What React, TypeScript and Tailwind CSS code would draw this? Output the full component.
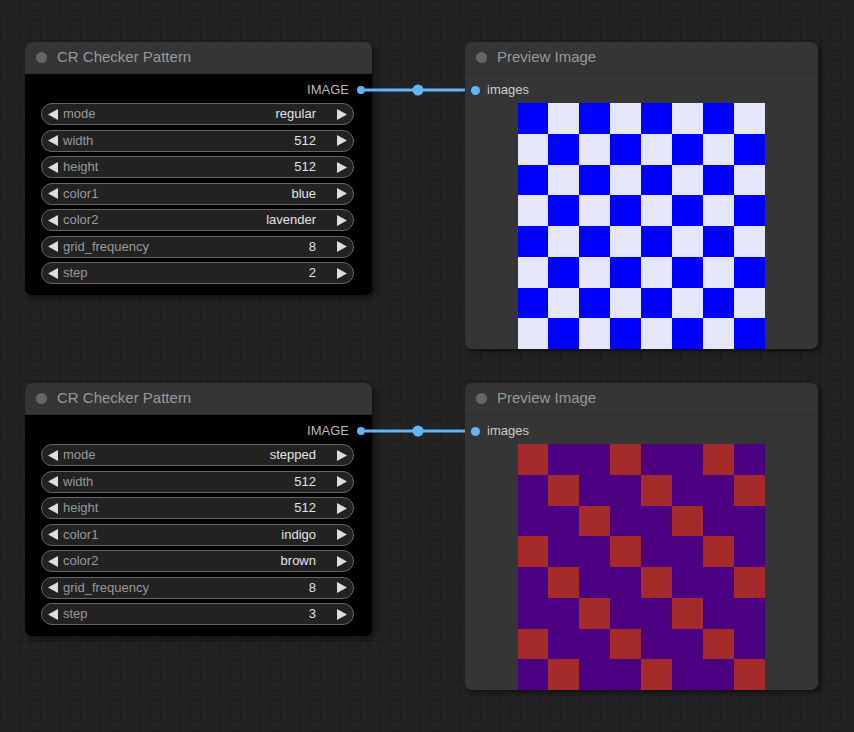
import React from 'react';

type Widget = { name: string; value: string };

const FONT = { fontFamily: '"Liberation Sans", Arial, sans-serif' };

const NODES: { top: number; widgets: Widget[]; c1: string; c2: string; stepped: boolean }[] = [
  {
    top: 42,
    c1: '#0000ff',
    c2: '#e6e6fa',
    stepped: false,
    widgets: [
      { name: 'mode', value: 'regular' },
      { name: 'width', value: '512' },
      { name: 'height', value: '512' },
      { name: 'color1', value: 'blue' },
      { name: 'color2', value: 'lavender' },
      { name: 'grid_frequency', value: '8' },
      { name: 'step', value: '2' },
    ],
  },
  {
    top: 383,
    c1: '#a52a2a',
    c2: '#4b0082',
    stepped: true,
    widgets: [
      { name: 'mode', value: 'stepped' },
      { name: 'width', value: '512' },
      { name: 'height', value: '512' },
      { name: 'color1', value: 'indigo' },
      { name: 'color2', value: 'brown' },
      { name: 'grid_frequency', value: '8' },
      { name: 'step', value: '3' },
    ],
  },
];

function Title({ text }: { text: string }) {
  return (
    <div className="h-[32px] flex items-center gap-[10px] pl-[11px] bg-[#353535] border-b border-[#2c2c2c] rounded-t-[7px]">
      <span className="w-[11px] h-[11px] rounded-full bg-[#666]" />
      <span className="text-[15px] text-[#999]">{text}</span>
    </div>
  );
}

function Arrow({ dir }: { dir: 'l' | 'r' }) {
  return (
    <svg width="10" height="11" viewBox="0 0 10 11" className="shrink-0">
      <polygon points={dir === 'l' ? '10,0 10,11 0,5.5' : '0,0 0,11 10,5.5'} fill="#ddd" />
    </svg>
  );
}

function WidgetRow({ w }: { w: Widget }) {
  return (
    <div className="h-[22px] flex items-center rounded-full border border-[#666] bg-[#222] pl-[6px] pr-[6px] text-[13px]">
      <Arrow dir="l" />
      <span className="text-[#999] ml-[5px]">{w.name}</span>
      <span className="flex-1" />
      <span className="text-[#e2e2e2] mr-[21px]">{w.value}</span>
      <Arrow dir="r" />
    </div>
  );
}

function Checker({ c1, c2, stepped }: { c1: string; c2: string; stepped: boolean }) {
  const cells = [];
  for (let r = 0; r < 8; r++) {
    for (let c = 0; c < 8; c++) {
      const on = stepped ? (((c - r) % 3) + 3) % 3 === 0 : (r + c) % 2 === 0;
      cells.push(<div key={`${r}-${c}`} style={{ background: on ? c1 : c2 }} />);
    }
  }
  return <div className="grid grid-cols-8 grid-rows-8 w-[247px] h-[246px]">{cells}</div>;
}

export default function App() {
  return (
    <div
      className="relative w-[854px] h-[732px] overflow-hidden bg-[#232323] bg-[linear-gradient(#1d1d1d_1px,transparent_1px),linear-gradient(90deg,#1d1d1d_1px,transparent_1px)] bg-[size:10px_10px]"
      style={FONT}
    >
      {NODES.map((n, i) => (
        <React.Fragment key={i}>
          {/* checker node */}
          <div
            className="absolute left-[25px] w-[347px] h-[253px] rounded-[7px] bg-black shadow-[3px_3px_6px_rgba(0,0,0,0.5)] flex flex-col"
            style={{ top: n.top }}
          >
            <Title text="CR Checker Pattern" />
            <div className="flex flex-col pl-[16px] pr-[18px] pt-[8px]">
              <div className="h-[16px] flex items-center justify-end gap-[8px] -mr-[11px] mb-[5px]">
                <span className="text-[13px] text-[#bbb]">IMAGE</span>
                <span className="w-[8px] h-[8px] rounded-full bg-[#64b5f6]" />
              </div>
              <div className="flex flex-col gap-[4.5px]">
                {n.widgets.map((w) => (
                  <WidgetRow key={w.name} w={w} />
                ))}
              </div>
            </div>
          </div>

          {/* link */}
          <svg className="absolute left-[355px] w-[130px] h-[20px]" style={{ top: n.top + 38 }} viewBox="0 0 130 20">
            <line x1="10" y1="10" x2="120" y2="10" stroke="#64b5f6" strokeWidth="3" />
            <circle cx="63" cy="10" r="5.5" fill="#64b5f6" />
          </svg>

          {/* preview node */}
          <div
            className="absolute left-[465px] w-[353px] h-[307px] rounded-[7px] bg-[#353535] shadow-[3px_3px_6px_rgba(0,0,0,0.5)] flex flex-col overflow-hidden"
            style={{ top: n.top }}
          >
            <Title text="Preview Image" />
            <div className="h-[16px] mt-[8px] flex items-center gap-[7px] pl-[6px]">
              <span className="w-[9px] h-[9px] rounded-full bg-[#64b5f6]" />
              <span className="text-[13px] text-[#ccc]">images</span>
            </div>
            <div className="flex justify-center pt-[5px] pr-[1px]">
              <Checker c1={n.c1} c2={n.c2} stepped={n.stepped} />
            </div>
          </div>
        </React.Fragment>
      ))}
    </div>
  );
}
